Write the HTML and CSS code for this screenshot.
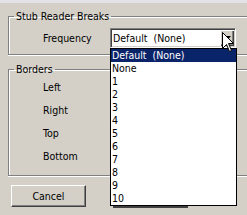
FILE: index.html
```html
<!DOCTYPE html>
<html>
  <head>
    <title>Stub Reader Breaks</title>
    <link rel="stylesheet" href="styles.css">
  </head>
  <body>
    <div class="titlebar"></div>

    <fieldset class="group group-stub">
      <legend>Stub Reader Breaks</legend>
      <div class="field-row">
        <label class="field-label">Frequency</label>
        <div class="combo">
          <span class="combo-value">Default&nbsp; (None)</span>
          <span class="combo-button">
            <svg width="7" height="4" viewBox="0 0 7 4"><path d="M0 0h7L3.5 4z" fill="#000"/></svg>
          </span>
        </div>
      </div>
    </fieldset>

    <fieldset class="group group-borders">
      <legend>Borders</legend>
      <div class="border-row">Left</div>
      <div class="border-row">Right</div>
      <div class="border-row">Top</div>
      <div class="border-row">Bottom</div>
    </fieldset>

    <button class="btn">Cancel</button>

    <!-- open dropdown of the Frequency combo -->
    <ul class="dropdown">
      <li class="selected">Default&nbsp; (None)</li>
      <li>None</li>
      <li>1</li>
      <li>2</li>
      <li>3</li>
      <li>4</li>
      <li>5</li>
      <li>6</li>
      <li>7</li>
      <li>8</li>
      <li>9</li>
      <li>10</li>
    </ul>
    <div class="dropdown-shadow"></div>

    <svg class="cursor" width="13" height="21" viewBox="0 0 13 21">
      <path d="M0.5 0.5V16.5L4.5 12.5L7.5 19.5L9.5 18.5L6.5 11.5H11.5Z" fill="#fff" stroke="#000" stroke-width="1" stroke-linejoin="miter"/>
    </svg>
  </body>
</html>
```

FILE: styles.css
```css
html {
  overflow: hidden;
}

body {
  margin: 0;
  height: 215px;
  overflow: hidden;
  background-color: #d4d0c8;
  color: #000;
  font-family: "DejaVu Sans Condensed", "Liberation Sans", sans-serif;
  font-size: 10.5px;
}

.titlebar {
  height: 3px;
  background-color: #e2e2e8;
}

/* groups run on past the right edge of the window, so no right border */
.group {
  margin: 0 0 0 8px;
  padding: 0;
  min-width: 0;
  border: 1px solid #808080;
  border-right: 0;
  box-shadow: inset 1px 1px 0 #fff, 0 1px 0 #fff;
}

.group legend {
  margin-left: 5px;
  padding: 0 2px;
  line-height: 13px;
}

.group-stub {
  margin-top: 7px;
}

.group-borders {
  margin-top: 8px;
  padding-bottom: 7px;
}

.field-row {
  display: flex;
  align-items: center;
  padding: 5px 0 6px 34px;
}

.field-label {
  width: 67px;
}

.combo {
  display: flex;
  align-items: center;
  justify-content: space-between;
  box-sizing: border-box;
  width: 126px;
  height: 20px;
  background-color: #fff;
  border: 1px solid;
  border-color: #808080 #fff #fff #808080;
  box-shadow: inset 1px 1px 0 #404040, inset -1px -1px 0 #d4d0c8;
}

.combo-value {
  padding-left: 2px;
}

.combo-button {
  display: flex;
  align-items: center;
  justify-content: center;
  width: 14px;
  height: 16px;
  margin-right: 1px;
  background-color: #d4d0c8;
  box-shadow: inset 1px 1px 0 #fff, inset -1px -1px 0 #404040, inset -2px -2px 0 #808080;
}

.border-row {
  height: 23px;
  line-height: 23px;
  padding-left: 34px;
}

.btn {
  display: block;
  width: 75px;
  height: 22px;
  margin: 9px 0 0 11px;
  padding: 0;
  font: inherit;
  color: #000;
  background-color: #d4d0c8;
  border: 1px solid;
  border-color: #fff #404040 #404040 #fff;
  box-shadow: inset -1px -1px 0 #808080;
}

.dropdown {
  position: absolute;
  left: 110px;
  top: 48px;
  width: 125px;
  margin: 0;
  padding: 0;
  list-style: none;
  background-color: #fff;
  border: 1px solid #000;
}

.dropdown li {
  height: 13px;
  line-height: 13px;
  padding-left: 1px;
  white-space: nowrap;
}

.dropdown li.selected {
  background-color: #0a246a;
  color: #fff;
}

.dropdown-shadow {
  position: absolute;
  left: 113px;
  top: 206px;
  width: 75px;
  height: 2px;
  background-color: #404040;
}

.cursor {
  position: absolute;
  left: 222px;
  top: 32px;
}
```
